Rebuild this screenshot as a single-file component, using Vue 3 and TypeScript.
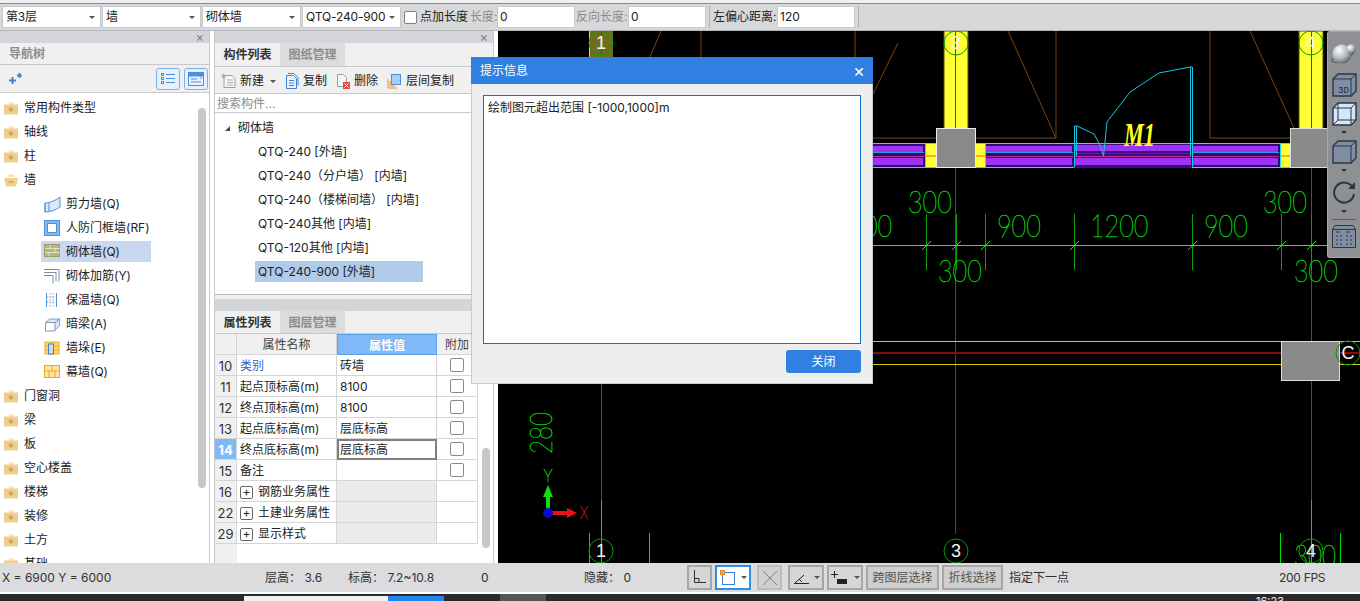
<script setup lang="ts">
const folders1: string[] = ['常用构件类型', '轴线', '柱']
const folders2: string[] = ['门窗洞', '梁', '板', '空心楼盖', '楼梯', '装修', '土方', '基础']
const subs = [
  { k: 'shear', t: '剪力墙(Q)' },
  { k: 'frame', t: '人防门框墙(RF)' },
  { k: 'brick', t: '砌体墙(Q)', sel: true },
  { k: 'rebar', t: '砌体加筋(Y)' },
  { k: 'insul', t: '保温墙(Q)' },
  { k: 'beam', t: '暗梁(A)' },
  { k: 'pier', t: '墙垛(E)' },
  { k: 'curtain', t: '幕墙(Q)' },
]
const comps = [
  { t: 'QTQ-240 [外墙]' },
  { t: 'QTQ-240（分户墙） [内墙]' },
  { t: 'QTQ-240（楼梯间墙） [内墙]' },
  { t: 'QTQ-240其他 [内墙]' },
  { t: 'QTQ-120其他 [内墙]' },
  { t: 'QTQ-240-900 [外墙]', sel: true },
]
const rows = [
  { n: 10, name: '类别', val: '砖墙', chk: true, link: true },
  { n: 11, name: '起点顶标高(m)', val: '8100', chk: true },
  { n: 12, name: '终点顶标高(m)', val: '8100', chk: true },
  { n: 13, name: '起点底标高(m)', val: '层底标高', chk: true },
  { n: 14, name: '终点底标高(m)', val: '层底标高', chk: true, active: true },
  { n: 15, name: '备注', val: '', chk: true },
  { n: 16, name: '钢筋业务属性', val: '', group: true },
  { n: 22, name: '土建业务属性', val: '', group: true },
  { n: 29, name: '显示样式', val: '', group: true },
]
const combos = ['第3层', '墙', '砌体墙', 'QTQ-240-900']
const ticks = [926, 956, 985, 1074, 1192, 1281, 1311]
const dims = [
  { t: '300', x: 908, y: 213 },
  { t: '00', x: 863, y: 237 },
  { t: '900', x: 997, y: 237 },
  { t: '1200', x: 1090, y: 237 },
  { t: '900', x: 1204, y: 237 },
  { t: '300', x: 1263, y: 213 },
  { t: '300', x: 938, y: 282 },
  { t: '300', x: 1294, y: 282 },
]
const walls = [
  { x: 873, w: 52 },
  { x: 986, w: 88 },
  { x: 1192, w: 88 },
]
</script>

<template>
  <div class="app">
    <div class="topline"></div>
    <div class="toolbar">
      <div v-for="c in combos" :key="c" class="combo">
        <span>{{ c }}</span><i class="caret"></i>
      </div>
      <span class="check"></span>
      <span class="lbl ptadd">点加长度</span>
      <span class="lbl off l1">长度:</span>
      <span class="inp">0</span>
      <span class="lbl off l2">反向长度:</span>
      <span class="inp i2">0</span>
      <span class="tsep s1"></span>
      <span class="lbl l3">左偏心距离:</span>
      <span class="inp">120</span>
      <span class="tsep s2"></span>
    </div>

    <div class="main">
      <section class="nav">
        <div class="closebar"><span class="x">×</span></div>
        <div class="navtitle">导航树</div>
        <div class="navtools">
          <svg class="spark" width="14" height="14" viewBox="0 0 14 14">
            <path d="M1 8.5h7M4.5 5v7M9 3.5h5M11.500 1v5" stroke="#3f82d8" stroke-width="2" fill="none" />
          </svg>
          <span class="navbtn">
            <svg width="16" height="14" viewBox="0 0 16 14" fill="none" stroke="#4a90e2">
              <rect x="1.500" y="1.500" width="2" height="2" /><rect x="1.500" y="5.500" width="2" height="2" /><rect x="1.500" y="9.500" width="2" height="2" />
              <path d="M6 2.500h9M6 6.500h9M6 10.500h9" />
            </svg>
          </span>
          <span class="navbtn b2">
            <svg width="16" height="14" viewBox="0 0 16 14" fill="none" stroke="#4a90e2">
              <rect x="0.500" y="0.500" width="15" height="13" /><rect x="1" y="1" width="14" height="3" fill="#4a90e2" />
              <path d="M3 7h6M3 10h10M12 6h2" />
            </svg>
          </span>
        </div>
        <div class="tree">
          <div v-for="f in folders1" :key="f" class="trow">
            <svg class="folder" width="14" height="13" viewBox="0 0 14 13">
              <path d="M5 0.500h5v2.500H5z" fill="#f4e0b4" /><rect x="0" y="2.500" width="14" height="10" fill="#efcf8e" />
              <path d="M4.500 7.500h5M7 5v5" stroke="#d0a048" stroke-width="1.300" />
            </svg>
            <span>{{ f }}</span>
          </div>
          <div class="trow">
            <svg class="folder" width="14" height="13" viewBox="0 0 14 13">
              <path d="M4 0.500h6l1 2.500H4z" fill="#f4e0b4" /><path d="M0 4h14l-2 8.500H2z" fill="#efcf8e" />
              <path d="M4.500 8h5" stroke="#d0a048" stroke-width="1.300" />
            </svg>
            <span>墙</span>
          </div>
          <div v-for="s in subs" :key="s.k" class="srow" :class="{ sel: s.sel }">
            <svg width="17" height="17" viewBox="0 0 17 17" fill="none" class="sicon">
              <template v-if="s.k === 'shear'">
                <path d="M1 7c4 0 10-2 15-6v10c-4 3-10 5-15 5z" fill="#dbe8f8" stroke="#4a90e2" />
                <path d="M1 7v9M5 6.500v9" stroke="#4a90e2" />
              </template>
              <template v-else-if="s.k === 'frame'">
                <rect x="0.500" y="0.500" width="15" height="15" fill="#8ab8ee" stroke="#4a90e2" />
                <rect x="3.500" y="3.500" width="9" height="9" fill="#fff" stroke="#4a90e2" />
              </template>
              <template v-else-if="s.k === 'brick'">
                <rect x="0.500" y="1.500" width="15" height="12" fill="#b5b58a" stroke="#a39c58" />
                <path d="M1 5.500h15M1 9.500h15M6 2v3.500M11 5.500v4M5 9.500v4" stroke="#e3e0c0" />
              </template>
              <template v-else-if="s.k === 'rebar'">
                <path d="M0 1.500h15v12M0 4.500h12v9M0 7.500h9v8" stroke="#7d8da0" />
              </template>
              <template v-else-if="s.k === 'insul'">
                <path d="M2.500 1v14M12.500 1v14" stroke="#4a90e2" />
                <path d="M6 1v14M9 1v14M3 5h9M3 10h9" stroke="#9aa9ba" stroke-dasharray="1.500 1.500" />
              </template>
              <template v-else-if="s.k === 'beam'">
                <path d="M1.500 6.500l4-3.500h10v7l-4 3.500z" fill="#dbe8f8" stroke="#4a90e2" stroke-width="0.800" />
                <path d="M1.500 6.500h9.500v8.500h-9.500z" fill="#fff" stroke="#8a95a2" />
                <path d="M11 6.500l4.500-3.500" stroke="#8a95a2" />
              </template>
              <template v-else-if="s.k === 'pier'">
                <rect x="1" y="2" width="14" height="12" fill="#ffd766" stroke="#f0a820" />
                <path d="M1 6h14M1 10h14" stroke="#f0a820" />
                <rect x="4.500" y="4" width="5" height="10" fill="#c9def5" stroke="#4a80c0" />
              </template>
              <template v-else>
                <rect x="0.500" y="1.500" width="15" height="12" fill="#ffe3a0" stroke="#f0a820" />
                <path d="M8 1.500v5M0.500 7h15M5 7v6.500M11 7v6.500" stroke="#f0a820" />
              </template>
            </svg>
            <span>{{ s.t }}</span>
          </div>
          <div v-for="f in folders2" :key="f" class="trow">
            <svg class="folder" width="14" height="13" viewBox="0 0 14 13">
              <path d="M5 0.500h5v2.500H5z" fill="#f4e0b4" /><rect x="0" y="2.500" width="14" height="10" fill="#efcf8e" />
              <path d="M4.500 7.500h5M7 5v5" stroke="#d0a048" stroke-width="1.300" />
            </svg>
            <span>{{ f }}</span>
          </div>
          <div class="tscroll"></div>
        </div>
      </section>

      <div class="gutter"></div>

      <section class="mid">
        <div class="closebar"><span class="x">×</span></div>
        <div class="tabs">
          <span class="tab on">构件列表</span><span class="tab">图纸管理</span>
        </div>
        <div class="comptools">
          <span class="ct new">
            <svg width="16" height="16" viewBox="0 0 16 16" fill="none">
              <path d="M3 2.500h8l3 3v9H3z" fill="#f6f6f6" stroke="#9aa0a8" /><path d="M6 7h6M6 9.500h6M6 12h6" stroke="#a9afb6" />
              <path d="M2.500 0.500v5M0 3h5M1 1.500l3 3M4 1.500l-3 3" stroke="#f09a3a" />
            </svg>
            新建<i class="caret small"></i>
          </span>
          <span class="ct">
            <svg width="14" height="16" viewBox="0 0 14 16" fill="none" stroke="#3f82d8">
              <path d="M1.500 2.500v13h10v-10l-3-3z" fill="#eaf2fb" /><path d="M4 7.500h5M4 10h5M4 12.500h5M3 .5h6l4 4v8" />
            </svg>
            复制
          </span>
          <span class="ct">
            <svg width="14" height="16" viewBox="0 0 14 16" fill="none">
              <path d="M1.500 1.500h6l3 3v9h-9z" fill="#f5f5f5" stroke="#9aa0a8" />
              <rect x="7" y="9" width="7" height="7" fill="#dd4a4a" /><path d="M8.500 10.500l4 4M12.500 10.500l-4 4" stroke="#fff" />
            </svg>
            删除
          </span>
          <span class="ct">
            <svg width="15" height="16" viewBox="0 0 15 16" fill="none">
              <path d="M1 6v9h9M3 8v5h5" stroke="#ef8a2e" /><rect x="4.500" y="1.500" width="9" height="10" fill="#a9cdf5" stroke="#4a90e2" />
            </svg>
            层间复制
          </span>
        </div>
        <div class="search">搜索构件...</div>
        <div class="complist">
          <div class="croot"><i class="tri"></i>砌体墙</div>
          <div v-for="c in comps" :key="c.t" class="citem" :class="{ sel: c.sel }">{{ c.t }}</div>
        </div>
        <div class="splitgap"></div>
        <div class="midhead"></div>
        <div class="tabs t2">
          <span class="tab on">属性列表</span><span class="tab">图层管理</span>
        </div>
        <div class="tablewrap">
          <div class="grid">
            <div class="c no hd"></div>
            <div class="c hd ctr">属性名称</div>
            <div class="c hd ctr hot">属性值</div>
            <div class="c hd ctr">附加</div>
            <template v-for="r in rows" :key="r.n">
              <div class="c no" :class="{ noact: r.active }">{{ r.n }}</div>
              <div class="c name" :class="{ link: r.link }">
                <span v-if="r.group" class="plus">+</span>{{ r.name }}
              </div>
              <div class="c val" :class="{ edit: r.active, grp: r.group }">{{ r.val }}</div>
              <div class="c ctr"><span v-if="r.chk" class="check tbl"></span></div>
            </template>
          </div>
          <div class="tstub"></div>
          <div class="pscroll"></div>
        </div>
      </section>

      <div class="gutter"></div>

      <section class="canvas">
        <svg class="cad" width="862" height="532" viewBox="498 31 862 532" fill="none">
          <!-- brown wall outlines -->
          <g stroke="#7a4410">
            <path d="M661 31L650 57M701 31V57M855 31V57M898 43L873 94M873 138H936M976 138H1056V31M1008 31L1056 138M1290 138H1210V31M1250 31L1294 128" />
          </g>
          <!-- yellow columns -->
          <rect x="589" y="31" width="24" height="30" fill="#6e6e1e" />
          <path d="M589.500 31V57" stroke="#ccc" />
          <rect x="944" y="31" width="24" height="98" fill="#ffff33" stroke="#5a4a00" />
          <rect x="1299" y="31" width="24" height="98" fill="#ffff33" stroke="#5a4a00" />

          <!-- red axis lines -->
          <g stroke="#ff0000">
            <path d="M601.500 31V57M601.500 384V500M955.500 31V128M955.500 168V534M1311.500 31V128M1311.500 168V341M1311.500 380V500" />
          </g>
          <path d="M601.500 500V563M1311.500 500V563M589.500 533V563M649.500 533V563M1280.500 533V563M1340.500 533V563" stroke="#00e000" />

          <!-- purple wall band -->
          <rect x="873" y="143" width="454" height="25" fill="#a9a9b0" />
          <rect x="925" y="144" width="11" height="23" fill="#ffff33" />
          <rect x="976" y="144" width="10" height="23" fill="#ffff33" />
          <rect x="1280" y="144" width="11" height="23" fill="#ffff33" />
          <path d="M925 156H936M976 156H986M1280 156H1291" stroke="#e06a10" />
          <path d="M925.500 144V167M985.500 144V167M1280.500 144V167" stroke="#22e0e0" />
          <rect x="1074" y="144" width="118" height="24" fill="#3d0b88" />
          <rect x="1075" y="145" width="116" height="6" fill="#a032f5" />
          <rect x="1075" y="158" width="116" height="7" fill="#a032f5" />
          <path d="M1075 153.500H1191" stroke="#5a20a0" />
          <path d="M1075 156.500H1191" stroke="#c22a8a" />
          <g v-for="w in walls" :key="w.x">
            <rect :x="w.x" y="144" :width="w.w" height="23" fill="#2f0b78" />
            <rect :x="w.x" y="146" :width="w.w - 2" height="6" fill="#a032f5" />
            <rect :x="w.x" y="158" :width="w.w - 2" height="7" fill="#a032f5" />
            <path :d="`M${w.x} 152.500H${w.x + w.w - 1}`" stroke="#29a0e8" />
            <path :d="`M${w.x} 156.500H${w.x + w.w - 1}`" stroke="#c22a8a" />
          </g>

          <!-- column boxes -->
          <rect x="936.500" y="128.500" width="39" height="39" fill="#8a8a8a" stroke="#eee" />
          <rect x="1290.500" y="128.500" width="40" height="39" fill="#8a8a8a" stroke="#ddd" />

          <!-- door swing -->
          <g stroke="#18c8e0" stroke-width="1">
            <path d="M1074.500 126V167M1076.500 126V156M1192.500 67V167M1190.500 67V156" />
            <path d="M1074.500 126H1077L1094 134L1100 145L1103.500 156L1107 122L1130 92L1159 73L1190 67H1192" />
          </g>
          <text x="1124" y="146" class="m1" textLength="31" lengthAdjust="spacingAndGlyphs">M1</text>

          <!-- dimension line -->
          <path d="M873 245.500H1330" stroke="#22f022" />
          <g v-for="t in ticks" :key="t">
            <path :d="`M${t + 0.500} 214V270`" stroke="#0aa00a" />
            <path :d="`M${t - 4} 250L${t + 5} 241`" stroke="#22e022" />
          </g>
          <text
            v-for="(d, i) in dims"
            :key="i"
            :x="d.x"
            :y="d.y"
            class="dim"
            :textLength="d.t.length * 14.600"
            lengthAdjust="spacingAndGlyphs"
          >{{ d.t }}</text>
          <text x="1294" y="567" class="dim" textLength="42" lengthAdjust="spacingAndGlyphs">300</text>

          <!-- C row -->
          <path d="M873 341.500H1281M873 364.500H1281M1340 341.500H1360M1340 364.500H1360" stroke="#d0d000" />
          <path d="M873 353H1281M1340 353H1360" stroke="#8b0a0a" stroke-width="2" />
          <rect x="1281.500" y="341.500" width="58" height="39" fill="#8a8a8a" stroke="#ddd" />

          <!-- axis bubbles -->
          <g stroke="#0a9a0a" fill="none">
            <circle cx="601" cy="43" r="12" />
            <circle cx="956" cy="43" r="12" />
            <circle cx="1311" cy="43" r="12" />
            <circle cx="601" cy="551" r="12" />
            <circle cx="956" cy="551" r="12" />
            <circle cx="1311" cy="551" r="12" />
            <circle cx="1348" cy="353" r="12" />
          </g>
          <text x="601" y="49" class="bub">1</text>
          <text x="956" y="49" class="bub">3</text>
          <text x="1311" y="49" class="bub">4</text>
          <text x="601" y="557" class="bub">1</text>
          <text x="956" y="557" class="bub">3</text>
          <text x="1311" y="557" class="bub">4</text>
          <text x="1348" y="359" class="bub">C</text>

          <text class="dim" transform="translate(552 454) rotate(-90)" textLength="42" lengthAdjust="spacingAndGlyphs">280</text>

          <!-- UCS -->
          <path d="M548 496V510" stroke="#11dd11" stroke-width="4" />
          <path d="M548 485L553 497H543Z" fill="#11dd11" />
          <path d="M552 513H569" stroke="#f01010" stroke-width="4" />
          <path d="M577 513L567 508V518Z" fill="#f01010" />
          <ellipse cx="548" cy="513" rx="5" ry="5" fill="#0a0ac0" />
          <text x="543.500" y="482" class="axl g" textLength="9" lengthAdjust="spacingAndGlyphs">Y</text>
          <text x="580" y="519" class="axl r" textLength="8" lengthAdjust="spacingAndGlyphs">X</text>
        </svg>

        <div class="float">
          <svg width="26" height="24" viewBox="0 0 26 24" class="sph">
            <defs>
              <radialGradient id="sph" cx="0.350" cy="0.300" r="0.800">
                <stop offset="0" stop-color="#fff" /><stop offset="0.550" stop-color="#b4b8c0" /><stop offset="1" stop-color="#4c5260" />
              </radialGradient>
            </defs>
            <ellipse cx="12" cy="15" rx="12" ry="4" fill="none" stroke="#4a505c" transform="rotate(-25 12 15)" />
            <circle cx="11" cy="13" r="9.500" fill="url(#sph)" />
            <circle cx="20" cy="8" r="4.500" fill="url(#sph)" />
          </svg>
          <svg width="25" height="24" viewBox="0 0 25 24" class="c1">
            <path d="M1 6L6 1H24V18L19 23H1Z" fill="#7f8ea3" stroke="#2c3644" stroke-width="1.400" />
            <path d="M1 6H19V23M19 6L24 1" stroke="#2c3644" fill="none" />
            <text x="6" y="20" class="t3d">3D</text>
          </svg>
          <svg width="25" height="24" viewBox="0 0 25 24" class="c2">
            <path d="M1 6L6 1H24V18L19 23H1Z" fill="#d3e6fb" stroke="#2c3644" stroke-width="1.400" />
            <path d="M1 6H19V23M19 6L24 1M6 1V18H24M6 18L1 23" stroke="#2c3644" fill="none" />
          </svg>
          <i class="ftri"></i>
          <svg width="25" height="24" viewBox="0 0 25 24" class="c3">
            <path d="M1 6L6 1H24V18L19 23H1Z" fill="#7f8ea3" stroke="#2c3644" stroke-width="1.400" />
            <path d="M1 6H19V23M19 6L24 1" stroke="#2c3644" fill="none" />
          </svg>
          <i class="ftri"></i>
          <svg width="24" height="24" viewBox="0 0 24 24" fill="none" class="c4">
            <path d="M21 7A10 10 0 1 0 22 13" stroke="#2c3644" stroke-width="2" />
            <path d="M16 8H23V1Z" fill="#2c3644" />
          </svg>
          <i class="ftri"></i>
          <div class="fsep"></div>
          <svg width="24" height="23" viewBox="0 0 24 23" fill="none" stroke="#2c3644">
            <path d="M0.500 4.500L3 0.500H21L23.500 4.500V22.500H0.500Z" fill="#7f8ea3" />
            <path d="M.5 4.500H23.500" />
            <path d="M4 7h4M4 11h2M8 11h2M4 15h2M8 15h2M4 19h2M8 19h2M14 7h4M14 11h2M18 11h2M14 15h2M18 15h2M14 19h2M18 19h2" />
          </svg>
        </div>
      </section>
    </div>

    <div class="status">
      <span class="st" style="width: 263px">X = 6900 Y = 6000</span>
      <span class="st" style="width: 83px">层高： 3.6</span>
      <span class="st" style="width: 133px">标高： 7.2~10.8</span>
      <span class="st" style="width: 103px">0</span>
      <span class="st" style="width: 103px">隐藏： 0</span>
      <span class="sb w25">
        <svg width="15" height="15" viewBox="0 0 15 15" fill="none" stroke="#333"><path d="M2.500 0V12.500H14M2.500 8.500H7V12.500" /></svg>
      </span>
      <span class="sb w36 blue">
        <svg width="16" height="16" viewBox="0 0 16 16" fill="none"><rect x="2.500" y="2.500" width="12" height="12" stroke="#3a80d0" /><rect x="0.500" y="0.500" width="4" height="4" fill="#f2a35a" stroke="#e08a3a" /></svg>
        <i class="caret small"></i>
      </span>
      <span class="sb w25 dis">
        <svg width="16" height="16" viewBox="0 0 16 16" fill="none" stroke="#808080"><path d="M1 1L15 15M15 1L1 15" /></svg>
      </span>
      <span class="sb w36">
        <svg width="16" height="14" viewBox="0 0 16 14" fill="none" stroke="#222"><path d="M1 12.500H16M2 12L11 4" /><path d="M6 8L9 11" /></svg>
        <i class="caret small"></i>
      </span>
      <span class="sb w36 nog">
        <svg width="18" height="15" viewBox="0 0 18 15"><path d="M0 4.500H7M3.500 1V8" stroke="#222" fill="none" /><rect x="6" y="9" width="10" height="5" fill="#222" /></svg>
        <i class="caret small"></i>
      </span>
      <span class="sb txt w73">跨图层选择</span>
      <span class="sb txt w61">折线选择</span>
      <span class="hint">指定下一点</span>
      <span class="fps">200 FPS</span>
    </div>
    <div class="taskbar">
      <span class="tstart"></span>
      <span class="tw"></span><span class="tb"></span>
      <span class="clock">16:23</span>
    </div>

    <div class="dialog">
      <div class="dtitle"><span>提示信息</span><span class="dx">×</span></div>
      <div class="dmsg">绘制图元超出范围 [-1000,1000]m</div>
      <div class="dfoot"><span class="dbtn">关闭</span></div>
    </div>
  </div>
</template>

<style scoped>
.app {
  position: relative;
  width: 1360px;
  height: 601px;
  overflow: hidden;
  display: flex;
  flex-direction: column;
  background: #fff;
  font: 12px/16px "Inter", "Noto Sans CJK SC", sans-serif;
  color: #222;
}
.topline { height: 3px; background: #f0f0f0; border-bottom: 1px solid #8a8a8a; flex: none; }
.toolbar {
  height: 26px;
  flex: none;
  display: flex;
  align-items: center;
  padding: 0 0 0 2px;
  background: #d7d8da;
  border-bottom: 1px solid #b5b6b9;
  box-sizing: content-box;
}
.combo {
  width: 99px;
  height: 22px;
  box-sizing: border-box;
  margin-right: 1px;
  padding: 0 5px 0 3px;
  background: #fff;
  border: 1px solid #c8c9cc;
  display: flex;
  align-items: center;
  justify-content: space-between;
  letter-spacing: -0.15px;
}
.caret {
  width: 0;
  height: 0;
  border-left: 3px solid transparent;
  border-right: 3px solid transparent;
  border-top: 3px solid #555;
  display: inline-block;
  flex: none;
}
.caret.small { border-width: 3px 3px 0; }
.check {
  width: 13px;
  height: 13px;
  box-sizing: border-box;
  background: #fff;
  border: 1px solid #808080;
  border-radius: 2px;
  margin-left: 2px;
  display: inline-block;
  flex: none;
}
.lbl { white-space: nowrap; flex: none; overflow: hidden; }
.ptadd { margin: 0 2px 0 3px; width: 48px; }
.off { color: #8c8c8c; }
.l1 { width: 27px; }
.l2 { width: 51px; margin-left: 1px; }
.l3 { width: 64px; margin-left: 3px; }
.inp {
  width: 78px;
  height: 22px;
  flex: none;
  box-sizing: border-box;
  background: #fff;
  border: 1px solid #c8c9cc;
  padding: 2px 2px;
}
.i2 { margin-left: 1px; }
.tsep { width: 1px; height: 22px; background: #b0b1b4; flex: none; }
.s1 { margin-left: 3px; }
.s2 { margin-left: 3px; }

.main { height: 532px; flex: none; display: flex; }
.nav { width: 210px; flex: none; border-right: 1px solid #c8c9cc; box-sizing: border-box; display: flex; flex-direction: column; }
.gutter { width: 4px; flex: none; background: #fff; }
.closebar {
  height: 12px;
  flex: none;
  background: #d4d5d9;
  position: relative;
}
.x { position: absolute; right: 5px; top: -2px; font-size: 13px; line-height: 16px; color: #80838a; }
.navtitle {
  height: 22px;
  flex: none;
  background: #f0f0f0;
  border-bottom: 1px solid #c8c9cc;
  padding: 3px 0 0 9px;
  color: #8c8c8c;
  font-weight: 700;
  box-sizing: border-box;
}
.navtools {
  height: 28px;
  flex: none;
  background: #f0f0f0;
  border-bottom: 1px solid #c8c9cc;
  display: flex;
  align-items: center;
  box-sizing: border-box;
  padding-left: 8px;
}
.spark { margin-right: 134px; }
.navbtn {
  width: 24px;
  height: 22px;
  box-sizing: border-box;
  border: 1px solid #7ab0ec;
  border-radius: 3px;
  background: #e8f1fb;
  display: flex;
  align-items: center;
  justify-content: center;
}
.navbtn.b2 { margin-left: 4px; }
.tree { flex: 1; position: relative; overflow: hidden; background: #fff; padding-top: 3px; }
.trow { height: 24px; display: flex; align-items: center; padding-left: 4px; }
.folder { margin-right: 6px; flex: none; }
.srow {
  height: 24px;
  margin-left: 41px;
  width: 110px;
  display: flex;
  align-items: center;
  padding-left: 3px;
  box-sizing: border-box;
  white-space: nowrap;
}
.srow.sel { background: #c8d8f0; height: 21px; margin-top: 1px; margin-bottom: 2px; }
.sicon { margin-right: 5px; flex: none; }
.tscroll {
  position: absolute;
  left: 198px;
  top: 15px;
  width: 8px;
  height: 380px;
  border-radius: 4px;
  background: #c8c8c8;
}

.mid { width: 280px; flex: none; box-sizing: border-box; border-left: 1px solid #c8c9cc; border-right: 1px solid #c8c9cc; display: flex; flex-direction: column; background: #f0f0f0; }
.tabs { height: 23px; flex: none; display: flex; background: #f0f0f0; border-bottom: 1px solid #c8c9cc; box-sizing: content-box; }
.tabs.t2 { height: 22px; }
.tab {
  width: 65px;
  text-align: center;
  line-height: 23px;
  font-weight: 700;
  color: #8c8c8c;
  background: #dcdcdc;
}
.tab.on { color: #333; background: #f0f0f0; }
.comptools {
  height: 27px;
  flex: none;
  background: #f0f0f0;
  display: flex;
  align-items: center;
  padding: 2px 0 0 6px;
  border-bottom: 1px solid #c8c9cc;
  box-sizing: border-box;
}
.ct { display: flex; align-items: center; gap: 4px; margin-right: 9px; white-space: nowrap; }
.ct.new { gap: 3px; }
.ct.new .caret { margin-left: 3px; }
.search {
  height: 19px;
  flex: none;
  background: #fff;
  border-bottom: 1px solid #c8c9cc;
  color: #8c8c8c;
  padding: 1px 0 0 2px;
  line-height: 18px;
  box-sizing: border-box;
}
.complist { height: 182px; flex: none; background: #fff; border-bottom: 1px solid #b8b8b8; box-sizing: border-box; padding-top: 3px; }
.croot { height: 24px; display: flex; align-items: center; padding-left: 10px; }
.tri {
  width: 0;
  height: 0;
  border-bottom: 5px solid #444;
  border-left: 5px solid transparent;
  margin-right: 8px;
}
.citem { height: 24px; line-height: 24px; padding-left: 43px; white-space: nowrap; }
.citem.sel {
  margin-left: 40px;
  width: 168px;
  padding-left: 3px;
  height: 21px;
  line-height: 21px;
  background: #b0cbea;
  box-sizing: border-box;
  margin-top: 1px;
}
.splitgap { height: 4px; flex: none; background: #f0f0f0; }
.midhead { height: 12px; flex: none; background: #d4d5d9; }
.tablewrap { flex: 1; position: relative; background: #fff; overflow: hidden; }
.grid {
  display: grid;
  grid-template-columns: 22px 100px 100px 41px;
  grid-auto-rows: 21px;
}
.c {
  box-sizing: border-box;
  border-right: 1px solid #d5d5d5;
  border-bottom: 1px solid #d5d5d5;
  padding: 2px 3px 0;
  line-height: 18px;
  white-space: nowrap;
  display: flex;
  align-items: center;
  background: #fff;
}
.c.no { background: #f0f0f0; justify-content: center; padding: 1px 0 0; color: #333; font-size: 13px; }
.c.hd { background: #f0f0f0; color: #444; }
.c.ctr { justify-content: center; }
.c.hot { background: #7fb9f8; color: #fff; font-weight: 700; border: 1px solid #5a9fe8; }
.c.noact { background: #7fb9f8; color: #fff; font-weight: 700; }
.c.link { color: #2a5fd8; }
.c.edit { border: 2px solid #808080; padding: 0 1px; }
.c.grp { background: #ebebeb; }
.plus {
  width: 13px;
  height: 13px;
  box-sizing: border-box;
  border: 1px solid #666;
  border-radius: 2px;
  font-size: 12px;
  line-height: 10px;
  text-align: center;
  margin-right: 5px;
  flex: none;
}
.c .check.tbl { margin: -2px 0 0; width: 14px; height: 14px; border-color: #8a8a8a; }
.tstub { position: absolute; left: 0; top: 210px; width: 22px; bottom: 0; background: #f0f0f0; }
.pscroll { position: absolute; left: 267px; top: 114px; width: 8px; height: 100px; border-radius: 4px; background: #c8c8c8; }

.canvas { width: 862px; flex: none; background: #000; position: relative; overflow: hidden; }
.cad { display: block; }
.dim { fill: #00dc00; stroke: #00dc00; stroke-width: 0.500; font-family: "Lato", "Liberation Sans", sans-serif; font-size: 32px; font-weight: 100; }
.bub { fill: #f4f4f4; font: 18px "Liberation Sans", sans-serif; text-anchor: middle; }
.m1 { fill: #ffff22; font: italic 700 34px "Liberation Serif", serif; }
.axl { font: 100 18px "Lato", "Liberation Sans", sans-serif; stroke-width: 0.500; }
.axl.g { fill: #11dd11; stroke: #11dd11; }
.axl.r { fill: #f01010; stroke: #f01010; }
.t3d { fill: #1f2a38; font: 9px "Liberation Mono", monospace; }
.float {
  position: absolute;
  right: 0;
  top: 0;
  width: 33px;
  height: 227px;
  box-sizing: border-box;
  padding-top: 9px;
  background: #8e9094;
  border-radius: 3px 0 0 3px;
  border: 1px solid #a8aaae;
  border-right: 0;
  display: flex;
  flex-direction: column;
  align-items: center;
}
.float svg { flex: none; }
.c1 { margin-top: 8px; }
.c2 { margin-top: 5px; }
.c3 { margin-top: 0; }
.c4 { margin-top: 3px; }
.ftri {
  width: 0;
  height: 0;
  border-left: 3px solid transparent;
  border-right: 3px solid transparent;
  border-top: 3px solid #2c3644;
  margin: 5px 0 6px;
  flex: none;
}
.fsep { width: 24px; height: 1px; background: #5e6066; margin: 0 0 5px; flex: none; }

.status {
  height: 29px;
  flex: none;
  background: #dcdcde;
  display: flex;
  align-items: center;
  padding-left: 2px;
  color: #333;
}
.st { white-space: nowrap; flex: none; }
.sb {
  height: 25px;
  box-sizing: border-box;
  border: 2px solid #a6a6a6;
  background: #d6d6d6;
  display: flex;
  align-items: center;
  justify-content: center;
  gap: 5px;
  margin-right: 3px;
  flex: none;
}
.w25 { width: 25px; }
.w36 { width: 36px; }
.w73 { width: 73px; }
.w61 { width: 61px; }
.blue { border-color: #2e8ee8; background: #fff; }
.dis { border-color: #bcbcbc; background: #d0d0d0; margin-left: 3px; margin-right: 6px; }
.txt { color: #555; background: #cfcfcf; white-space: nowrap; }
.hint { margin-left: 3px; white-space: nowrap; }
.fps { position: absolute; left: 1279px; bottom: 15px; white-space: nowrap; letter-spacing: -0.3px; }
.taskbar {
  height: 9px;
  flex: none;
  border-top: 2px solid #fff;
  box-sizing: border-box;
  background: #2a2a2c;
  display: flex;
  position: relative;
  overflow: hidden;
}
.tstart { width: 46px; background: #555; position: absolute; left: 500px; top: 0; bottom: 0; }
.tw { position: absolute; left: 244px; top: 2px; bottom: 0; width: 144px; background: #f2f2f2; }
.tb { position: absolute; left: 388px; top: 2px; bottom: 0; width: 56px; background: #1f86f0; }
.clock { position: absolute; left: 1256px; top: 1px; color: #eee; font-size: 11px; line-height: 12px; }

.dialog {
  position: absolute;
  left: 471px;
  top: 57px;
  width: 402px;
  height: 327px;
  box-sizing: border-box;
  background: #eeeeee;
  border: 1px solid #c5cbd6;
  border-top: 0;
  display: flex;
  flex-direction: column;
}
.dtitle {
  height: 27px;
  flex: none;
  background: #2f80e0;
  color: #fff;
  display: flex;
  align-items: center;
  justify-content: space-between;
  padding: 0 8px 0 9px;
  margin: 0 -1px;
}
.dx { font-size: 18px; line-height: 16px; }
.dmsg {
  margin: 11px 11px 0;
  height: 249px;
  flex: none;
  box-sizing: border-box;
  background: #fff;
  border: 1px solid #0a72c9;
  padding: 4px;
}
.dfoot { display: flex; justify-content: flex-end; padding: 6px 11px 0; }
.dbtn {
  width: 75px;
  height: 23px;
  background: #2f80e0;
  color: #fff;
  border-radius: 3px;
  text-align: center;
  line-height: 24px;
}
</style>
